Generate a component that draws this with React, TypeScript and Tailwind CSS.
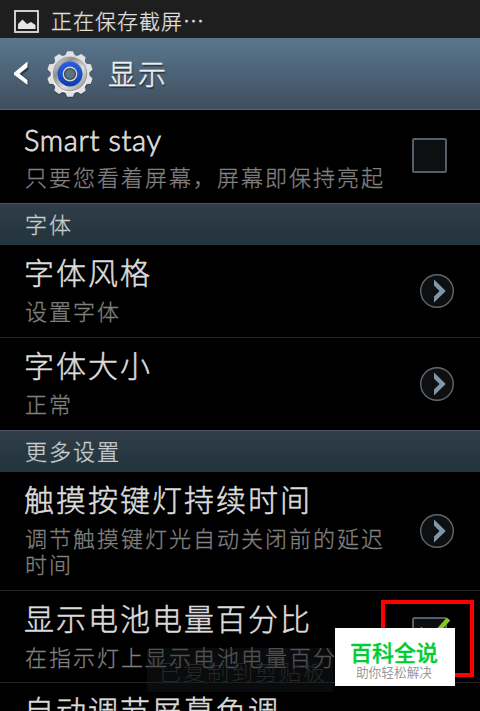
import React from 'react';

interface RowProps {
  title: string;
  summary?: string;
  height: string;
  divider?: boolean;
  latin?: boolean;
  children?: React.ReactNode;
}

const teeth = [0, 36, 72, 108, 144, 180, 216, 252, 288, 324];

const GearIcon = () => {
  return (
    <svg width="48" height="48" viewBox="-24 -24 48 48" className="ml-[16px] shrink-0">
      <defs>
        <linearGradient id="metal" x1="0" y1="0" x2="0" y2="1">
          <stop offset="0" stopColor="#d6d6d6" />
          <stop offset="1" stopColor="#fafafa" />
        </linearGradient>
        <linearGradient id="dish" x1="0" y1="0" x2="1" y2="1">
          <stop offset="0" stopColor="#f0f0f0" />
          <stop offset="0.3" stopColor="#8f8f8f" />
          <stop offset="0.6" stopColor="#dedede" />
          <stop offset="1" stopColor="#858585" />
        </linearGradient>
        <linearGradient id="blue" x1="0" y1="0" x2="0" y2="1">
          <stop offset="0" stopColor="#2b5fe0" />
          <stop offset="1" stopColor="#0a3fae" />
        </linearGradient>
      </defs>
      <g fill="#26323c" opacity="0.45" transform="translate(0 1)">
        <circle r="20" />
        {teeth.map((angle) => (
          <path key={angle} d="M-5-18L-2.8-23H2.8L5-18Z" transform={`rotate(${angle})`} />
        ))}
      </g>
      <g fill="url(#metal)">
        <circle r="19.4" />
        {teeth.map((angle) => (
          <path key={angle} d="M-5-18L-2.8-22.8H2.8L5-18Z" fill="#e2e2e2" transform={`rotate(${angle})`} />
        ))}
      </g>
      <circle r="16.8" fill="url(#dish)" stroke="#999" strokeWidth="1" />
      <circle r="12.5" fill="url(#blue)" />
      <circle r="7.4" fill="#d4d4d4" />
      <circle r="5.4" fill="#5c7285" stroke="#4a4a4a" strokeWidth="1.4" />
    </svg>
  );
};

const Arrow = () => {
  return (
    <svg width="36" height="36" viewBox="0 0 36 36" className="mr-[25px] shrink-0">
      <circle cx="18" cy="18" r="16.3" fill="#0d0f11" stroke="#62676f" strokeWidth="1.4" />
      <path d="M15 6.5L26.3 17.5V18.5L15 29.5V23.5L20.5 18L15 12.5Z" fill="#8296aa" />
    </svg>
  );
};

const Row = ({ title, summary, height, divider, latin, children }: RowProps) => {
  return (
    <div className={`flex shrink-0 items-center ${height} ${divider ? 'border-b border-[#272727]' : ''}`}>
      <div className="h-full min-w-0 flex-1 pl-[24px] pt-[6px]">
        <div
          className={
            latin
              ? "pt-[4px] font-['Lato'] text-[29px] leading-[38px] tracking-[0.65px] text-[#dcdcdc] [-webkit-text-stroke:0.8px_#dcdcdc]"
              : 'whitespace-nowrap pb-[2px] text-[30px] leading-[40px] tracking-[2px] text-[#dcdcdc] [-webkit-text-stroke:0.5px_#dcdcdc]'
          }>
          {title}
        </div>
        {summary && (
          <div className="mt-[4px] w-[369px] whitespace-pre-line pl-[1px] text-[22px] leading-[26px] tracking-[2px] text-[#808080] [-webkit-text-stroke:0.3px_#808080]">
            {summary}
          </div>
        )}
      </div>
      {children}
    </div>
  );
};

const Section = ({ title }: { title: string }) => {
  return (
    <div className="h-[42px] shrink-0 border-t border-[#4b5660] bg-linear-to-b from-[#303d49] to-[#22343c] pl-[25px] text-[22px] leading-[38px] tracking-[2px] text-[#c9cdd0] [-webkit-text-stroke:0.3px_#c9cdd0]">
      {title}
    </div>
  );
};

const App = () => {
  return (
    <div className="relative flex h-[711px] w-[480px] flex-col overflow-hidden bg-black font-['Noto_Sans_CJK_SC',sans-serif] font-light">
      <div className="flex h-[38px] shrink-0 items-center bg-[#1e1e1e] pl-[14px] pt-[5px]">
        <svg width="25" height="23" viewBox="0 0 25 23" className="shrink-0">
          <rect x="1" y="1" width="23" height="21" fill="none" stroke="#e0e0e0" strokeWidth="1.8" />
          <path d="M4 19V14L8.5 9.5L13 14L17 12L21.5 15V19Z" fill="#e4e4e4" />
        </svg>
        <span className="-mt-[4px] ml-[12px] text-[21px] leading-[32px] tracking-[1px] text-[#dedede] [-webkit-text-stroke:0.3px_#dedede]">
          正在保存截屏…
        </span>
      </div>

      <div className="flex h-[72px] shrink-0 items-center border-b border-[#5b6670] bg-linear-to-b from-[#5a778e] to-[#3e4f60] pl-[14px]">
        <svg width="16" height="26" viewBox="0 0 16 26" className="shrink-0">
          <path d="M14.5 3V9L8 13.5L14.5 19V25.5L1 14.5Z" fill="#2b3945" />
          <path d="M13.5 0.5V6.3L5.5 12.7L13.5 19V24L0 13.7V11.8Z" fill="#fff" />
        </svg>
        <GearIcon />
        <h1 className="-mt-[2px] ml-[14px] text-[28px] leading-[40px] tracking-[2px] text-[#eee] [-webkit-text-stroke:0.5px_#eee] [text-shadow:1px_2px_1px_#25313b]">
          显示
        </h1>
      </div>
      <div className="h-px shrink-0 bg-black" />

      <Row title="Smart stay" summary="只要您看着屏幕，屏幕即保持亮起" height="h-[92px]" latin>
        <div className="-mt-[3px] mr-[33px] size-[35px] shrink-0 rounded-[2px] border-2 border-[#565f68] bg-[#0e0f11]" />
      </Row>
      <Section title="字体" />
      <Row title="字体风格" summary="设置字体" height="h-[93px]" divider>
        <Arrow />
      </Row>
      <Row title="字体大小" summary="正常" height="h-[92px]">
        <Arrow />
      </Row>
      <Section title="更多设置" />
      <Row title="触摸按键灯持续时间" summary={'调节触摸键灯光自动关闭前的延迟\n时间'} height="h-[119px]" divider>
        <Arrow />
      </Row>
      <Row title="显示电池电量百分比" summary="在指示灯上显示电池电量百分比" height="h-[92px]" divider>
        <svg width="42" height="40" viewBox="0 0 42 40" className="-mt-[3px] mr-[26px] shrink-0">
          <rect x="1" y="3" width="33" height="33" rx="1.5" fill="#0e0f11" stroke="#565f68" strokeWidth="2" />
          <path d="M8 13L16 27L36.5 4" fill="none" stroke="#86c91c" strokeWidth="4.5" />
        </svg>
      </Row>
      <Row title="自动调节屏幕色调" height="h-[92px]" />

      {/* fading toast */}
      <div className="absolute left-[147px] top-[648px] h-[44px] w-[186px] rounded-[3px] bg-[#15181b]/45 pl-[12px] text-[22px] leading-[44px] tracking-[2px] whitespace-nowrap text-[#303030]/80">
        已复制到剪贴板
      </div>

      {/* highlight frame and watermark */}
      <div className="absolute left-[381px] top-[600px] h-[77px] w-[93px] border-4 border-[#fe0000]" />
      <div className="absolute left-[335px] top-[628px] flex h-[58px] w-[120px] flex-col items-center bg-white">
        <div className="-ml-[2px] mt-[8px] text-[22px] font-medium leading-[30px] text-[#00cd31] [-webkit-text-stroke:0.3px_#00cd31]">百科全说</div>
        <div className="-ml-[2px] -mt-[2px] text-[12.7px] font-normal leading-[16px] text-[#999]">助你轻松解决</div>
      </div>
    </div>
  );
};

export default App;
